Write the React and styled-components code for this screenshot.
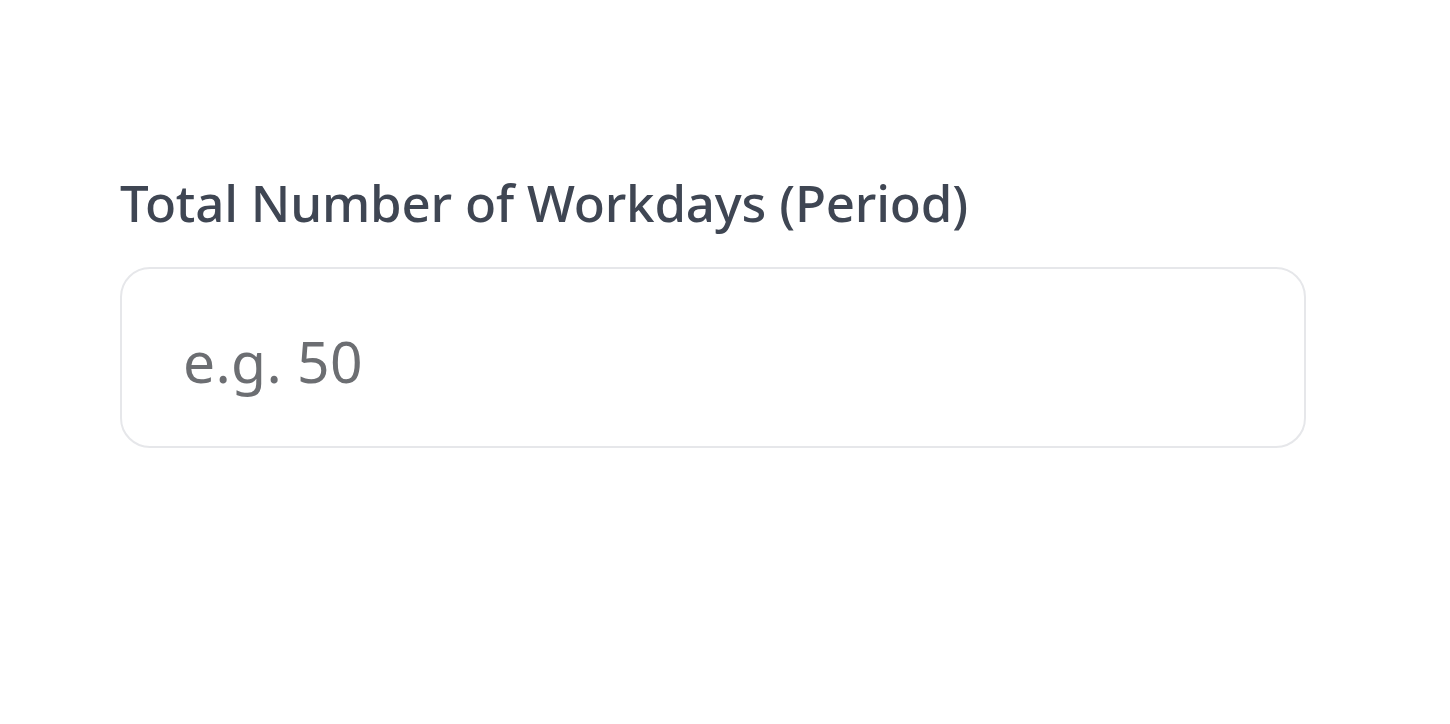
import styled, { createGlobalStyle } from "styled-components";

const GlobalStyle = createGlobalStyle`
  html, body {
    margin: 0;
    padding: 0;
    background: #ffffff;
  }
  body {
    font-family: "Noto Sans", "Open Sans", "Liberation Sans", sans-serif;
  }
`;

const Page = styled.div`
  width: 1450px;
  height: 724px;
  box-sizing: border-box;
  padding: 172px 0 0 120px;
`;

const Field = styled.div`
  display: flex;
  flex-direction: column;
  gap: 35px;
  width: 1186px;
`;

const Label = styled.label`
  font-size: 51px;
  font-weight: 500;
  letter-spacing: -0.2px;
  color: #3f4653;
  line-height: 60px;
`;

const Input = styled.input`
  box-sizing: border-box;
  width: 100%;
  height: 181px;
  border: 2px solid #e6e7ea;
  border-radius: 30px;
  padding: 6px 0 0 61px;
  font-family: inherit;
  font-size: 57px;
  letter-spacing: 0.3px;
  color: #374151;
  background: #ffffff;
  outline: none;

  &::placeholder {
    color: #6c6e72;
  }
`;

export default function App() {
  return (
    <>
      <GlobalStyle />
      <Page>
        <Field>
          <Label htmlFor="workdays">Total Number of Workdays (Period)</Label>
          <Input id="workdays" type="text" placeholder="e.g. 50" />
        </Field>
      </Page>
    </>
  );
}
